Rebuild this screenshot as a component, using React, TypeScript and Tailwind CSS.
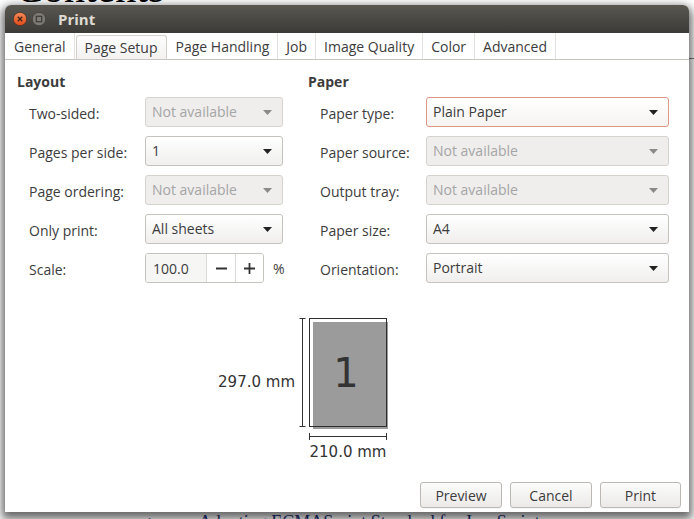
import type React from "react";
import clsx from "clsx";

type Row = Readonly<{
  label: string;
  value?: string;
  disabled?: boolean;
  focused?: boolean;
  spin?: boolean;
}>;

const LAYOUT_ROWS: ReadonlyArray<Row> = [
  { label: "Two-sided:", value: "Not available", disabled: true },
  { label: "Pages per side:", value: "1" },
  { label: "Page ordering:", value: "Not available", disabled: true },
  { label: "Only print:", value: "All sheets" },
  { label: "Scale:", spin: true },
];

const PAPER_ROWS: ReadonlyArray<Row> = [
  { label: "Paper type:", value: "Plain Paper", focused: true },
  { label: "Paper source:", value: "Not available", disabled: true },
  { label: "Output tray:", value: "Not available", disabled: true },
  { label: "Paper size:", value: "A4" },
  { label: "Orientation:", value: "Portrait" },
];

const TABS = ["General", "Page Setup", "Page Handling", "Job", "Image Quality", "Color", "Advanced"];

export default function App(): React.JSX.Element {
  return (
    <div className="relative h-[519px] w-[694px] overflow-hidden bg-white font-['Open_Sans','Noto_Sans',sans-serif] text-[14px] text-[#3c3c3c]">
      <BackgroundDocument />
      <PrintDialog />
    </div>
  );
}

function BackgroundDocument(): React.JSX.Element {
  return (
    <>
      <div className="absolute left-[15px] top-[-33px] font-['Liberation_Serif',serif] text-[42px] leading-none text-black">
        Contents
      </div>
      <div className="absolute right-0 top-[58px] h-px w-[20px] bg-[#7a7a7a]" />
      <div className="absolute left-[148px] top-[513px] flex gap-[38px] font-['Liberation_Serif',serif] text-[18px] leading-none text-[#1c2f7a]">
        <span className="text-[12px] leading-[18px]">im</span>
        <span>Adopting ECMAScript Standard for JavaScript</span>
      </div>
    </>
  );
}

function PrintDialog(): React.JSX.Element {
  return (
    <div className="absolute left-[5px] top-[5px] flex h-[507px] w-[684px] flex-col overflow-hidden rounded-t-[6px] bg-white shadow-[0_4px_10px_3px_rgba(0,0,0,0.6)]">
      <TitleBar />
      <TabBar />
      <div className="flex pl-[12px] pt-[12px]">
        <Section title="Layout" rows={LAYOUT_ROWS} labelWidth="w-[116px]" fieldWidth="w-[138px]" className="w-[266px]" />
        <Section title="Paper" rows={PAPER_ROWS} labelWidth="w-[106px]" fieldWidth="w-[243px]" className="ml-[25px] w-[361px]" />
      </div>
      <PagePreview />
      <div className="mt-auto flex justify-end gap-[8px] pb-[4px] pr-[8px]">
        <DialogButton label="Preview" />
        <DialogButton label="Cancel" />
        <DialogButton label="Print" />
      </div>
    </div>
  );
}

function TitleBar(): React.JSX.Element {
  return (
    <div className="flex h-[28px] shrink-0 items-center bg-gradient-to-b from-[#5a5751] to-[#3c3b37] pl-[8px]">
      <svg width="14" height="14" viewBox="0 0 14 14">
        <defs>
          <linearGradient id="close" x1="0" y1="0" x2="0" y2="1">
            <stop offset="0" stopColor="#f58a5c" />
            <stop offset="1" stopColor="#df4b17" />
          </linearGradient>
        </defs>
        <circle cx="7" cy="7" r="6.6" fill="url(#close)" stroke="#3a2a22" strokeWidth="0.6" />
        <path d="M4.8 4.8 L9.2 9.2 M9.2 4.8 L4.8 9.2" stroke="#3b2418" strokeWidth="1.3" />
      </svg>
      <svg width="14" height="14" viewBox="0 0 14 14" className="ml-[5px]">
        <circle cx="7" cy="7" r="6.6" fill="#7e7b76" stroke="#3a3935" strokeWidth="0.6" />
        <rect x="4.3" y="4.3" width="5.4" height="5.4" fill="none" stroke="#3c3b37" strokeWidth="1.2" />
      </svg>
      <span className="ml-[12px] text-[15px] font-bold text-[#dfdbd2]">Print</span>
    </div>
  );
}

function TabBar(): React.JSX.Element {
  return (
    <div className="flex h-[27px] shrink-0 items-stretch border-b border-[#c9c6c1] pl-px">
      {TABS.map((tab) =>
        tab === "Page Setup" ? (
          <div
            key={tab}
            className="mt-[2px] ml-[1px] mr-px flex items-center rounded-t-[3px] border-x border-t border-[#d4d1cc] bg-gradient-to-b from-[#fdfdfd] to-[#f3f2f1] px-[8px]"
          >
            {tab}
          </div>
        ) : (
          <div key={tab} className="flex items-center border-r border-[#e4e2df] px-[8px] pt-[1px]">
            {tab}
          </div>
        ),
      )}
    </div>
  );
}

type SectionProps = Readonly<{
  title: string;
  rows: ReadonlyArray<Row>;
  labelWidth: string;
  fieldWidth: string;
  className?: string;
}>;

function Section(props: SectionProps): React.JSX.Element {
  return (
    <div className={props.className}>
      <div className="h-[20px] font-bold leading-[20px]">{props.title}</div>
      <div className="mt-[5px] flex flex-col gap-[9px] pl-[12px]">
        {props.rows.map((row) => (
          <div key={row.label} className="flex h-[30px] items-center">
            <div className={clsx("shrink-0 pt-[3px]", props.labelWidth)}>{row.label}</div>
            {row.spin ? (
              <ScaleSpin />
            ) : (
              <Combo value={row.value ?? ""} disabled={row.disabled} focused={row.focused} width={props.fieldWidth} />
            )}
          </div>
        ))}
      </div>
    </div>
  );
}

type ComboProps = Readonly<{
  value: string;
  disabled?: boolean;
  focused?: boolean;
  width: string;
}>;

function Combo(props: ComboProps): React.JSX.Element {
  return (
    <div
      className={clsx(
        "flex h-[30px] items-center justify-between rounded-[3px] border pl-[6px] pr-[10px]",
        props.width,
        props.disabled
          ? "border-[#d6d3ce] bg-[#efeeed] text-[#a5a5a5]"
          : props.focused
            ? "border-[#dc9a84] bg-gradient-to-b from-white to-[#f6f4f2]"
            : "border-[#c6c3be] bg-gradient-to-b from-white to-[#f0efee]",
      )}
    >
      <span className="-mt-[2px]">{props.value}</span>
      <svg width="9" height="5" viewBox="0 0 9 5">
        <polygon points="0,0 9,0 4.5,5" fill={props.disabled ? "#8a8a8a" : "#222"} />
      </svg>
    </div>
  );
}

function ScaleSpin(): React.JSX.Element {
  return (
    <div className="flex items-center">
      <div className="flex h-[30px] w-[119px] overflow-hidden rounded-[3px] border border-[#c6c3be]">
        <div className="flex w-[61px] items-center border-r border-[#dcdad6] bg-[#f6f6f5] pl-[7px]">100.0</div>
        <div className="flex w-[29px] items-center justify-center border-r border-[#dcdad6] bg-white">
          <svg width="11" height="11" viewBox="0 0 11 11">
            <path d="M0 5.5 H11" stroke="#333" strokeWidth="1.8" />
          </svg>
        </div>
        <div className="flex flex-1 items-center justify-center bg-white">
          <svg width="11" height="11" viewBox="0 0 11 11">
            <path d="M0 5.5 H11 M5.5 0 V11" stroke="#333" strokeWidth="1.8" />
          </svg>
        </div>
      </div>
      <span className="ml-[9px]">%</span>
    </div>
  );
}

function PagePreview(): React.JSX.Element {
  return (
    <div className="mt-[35px] grid grid-cols-[1fr_80px_1fr] pl-[4px] font-['DejaVu_Sans',sans-serif] text-[15px] text-[#333]">
      <div className="flex justify-end">
        <span className="pt-[55px] leading-[18px]">297.0 mm</span>
        <svg width="7" height="109" viewBox="0 0 7 109" className="ml-[4px] mr-[3px]">
          <path d="M3.5 0.5 V108.5 M0.5 0.5 H6.5 M0.5 108.5 H6.5" stroke="#333" strokeWidth="1" fill="none" />
        </svg>
      </div>
      <div className="flex flex-col">
        <svg width="80" height="122" viewBox="0 0 80 122">
          <rect x="4" y="4" width="75" height="107" fill="#9b9b9b" />
          <rect x="0.5" y="0.5" width="77" height="108" fill="none" stroke="#2e2e2e" strokeWidth="1" />
          <text x="37" y="55" textAnchor="middle" dominantBaseline="central" fontSize="40" fill="#333" fontFamily="DejaVu Sans, sans-serif">
            1
          </text>
          <path d="M0.5 118.5 H77.5 M0.5 115 V122 M77.5 115 V122" stroke="#333" strokeWidth="1" fill="none" />
        </svg>
        <div className="mt-[3px] w-[78px] whitespace-nowrap text-center leading-[18px]">
          <span className="-mx-4">210.0 mm</span>
        </div>
      </div>
      <div />
    </div>
  );
}

function DialogButton({ label }: Readonly<{ label: string }>): React.JSX.Element {
  return (
    <button
      type="button"
      className={clsx(
        "flex h-[26px] items-center justify-center rounded-[3px] border border-[#bcb8b3] bg-gradient-to-b from-[#fcfcfc] to-[#ebeae8] text-[#3c3c3c] shadow-[0_1px_0_rgba(0,0,0,0.04)]",
        label === "Print" ? "w-[81px]" : "w-[82px]",
      )}
    >
      {label}
    </button>
  );
}
